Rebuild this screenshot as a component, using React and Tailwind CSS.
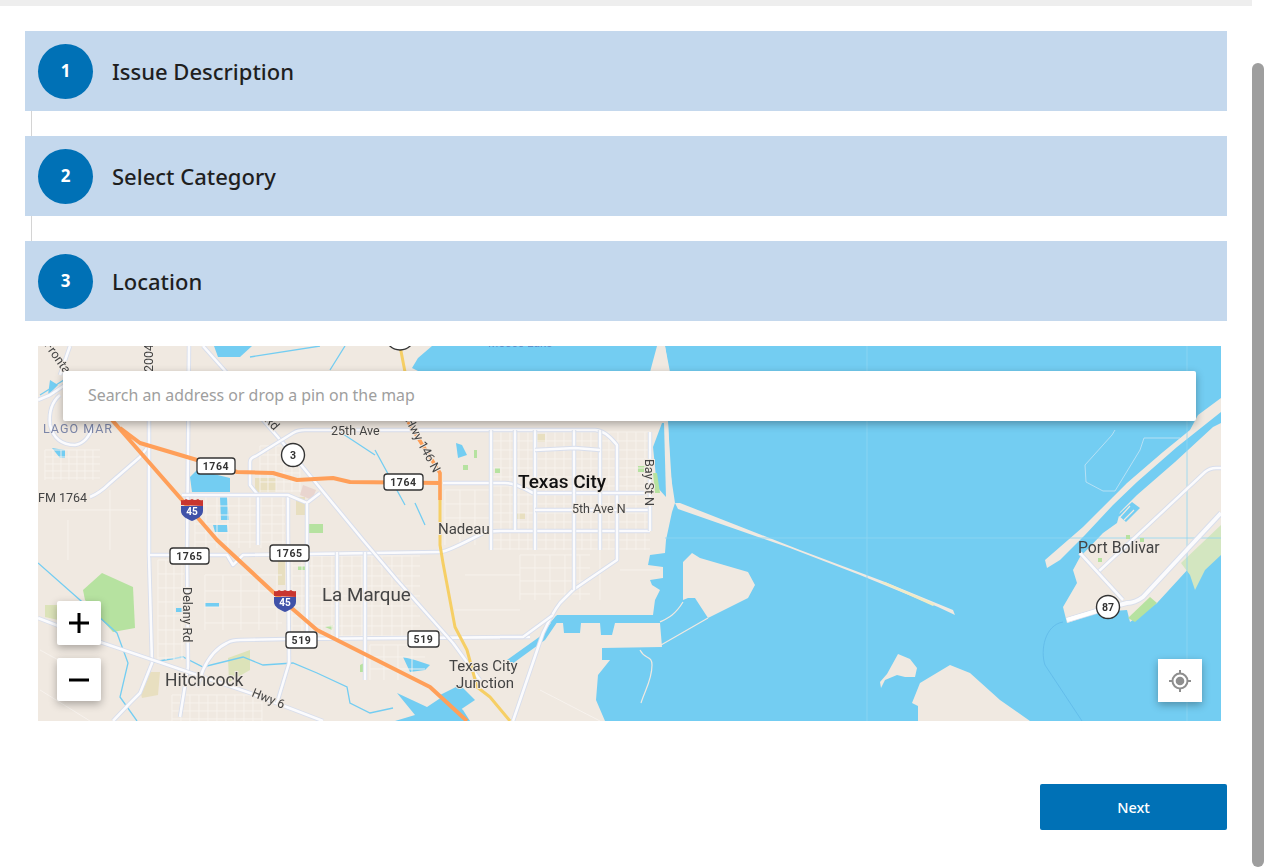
import React from "react";

const WATER = "#73CDF2";
const LAND = "#F0E9E1";
const PARK = "#B6E2A0";
const TAN = "#E8DFC0";

const majorRoads = [
  "M90 497 Q100 493 110 483 L140 457 L147 448",
  "M149 346 L149 555 L152 663 L140 693 L130 703 L113 721",
  "M189 346 L187 555 L188 667 L180 717",
  "M38 618 L103 643 L250 693 L323 721",
  "M150 555 L227 555 L233 565 L243 555 L440 552 Q447 552 483 533 Q487 531 500 531 L650 531",
  "M197 687 L203 670 Q212 650 227 643 Q232 640 240 640 L287 639 L530 637",
  "M288 495 L288 530 L289 663 L277 703",
  "M203 346 L227 373 L263 420 L283 443 L363 540 L397 580 L453 643 L480 680",
  "M258 545 L258 495 L250 485 L250 462 Q250 458 256 456 L293 433 Q298 430 305 430 L595 430 Q605 430 617 445 L617 560 L573 590 L560 603 Q553 612 543 633 L513 721",
  "M443 483 L505 483 Q515 483 533 493 L650 493",
  "M491 430 L491 550", "M515 430 L515 530", "M535 430 L535 550", "M574 430 L574 590", "M600 430 L600 550",
  "M535 450 L575 448 L600 450", "M535 510 L650 510", "M182 495 L288 495 L307 503 L320 493",
  "M650 432 L650 531", "M500 637 L523 637 L553 615", "M337 552 L337 640", "M307 503 L307 640", "M365 552 L365 680",
  "M1221 468 L1216 468 Q1210 468 1205 472 L1098 572", "M1080 553 L1123 600",
  "M60 395 Q48 405 50 425 Q55 445 75 445 Q88 443 93 425",
  "M38 400 L50 395 L80 375 M60 375 L70 346",
];

const grid = (x0, y0, x1, y1, dx, dy) => {
  let d = "";
  for (let x = x0; x <= x1; x += dx) d += `M${x} ${y0} L${x} ${y1} `;
  for (let y = y0; y <= y1; y += dy) d += `M${x0} ${y} L${x1} ${y} `;
  return d;
};

const minorRoads = [
  grid(445, 490, 490, 545, 15, 14),
  grid(492, 432, 650, 550, 9, 9),
  grid(292, 556, 420, 636, 10, 10),
  grid(195, 497, 285, 548, 11, 9),
  grid(260, 446, 300, 492, 8, 9),
  grid(45, 450, 100, 480, 8, 7),
  grid(158, 560, 184, 660, 8, 14),
  grid(172, 695, 262, 721, 9, 8),
  grid(205, 575, 282, 630, 18, 16),
  grid(520, 555, 590, 600, 15, 13),
  grid(370, 645, 425, 680, 14, 12),
  "M60 510 L140 510 M110 490 L110 550 M68 520 L68 560 M600 545 L600 600 M620 570 L660 570 M465 575 L520 575 M455 610 L520 610 M40 650 L95 680 M40 690 L90 721 M540 690 L600 721",
];

const Road = ({ d, w = 3.2 }) => (
  <>
    <path d={d} fill="none" stroke="#D8DEEC" strokeWidth={w + 1.2} strokeLinejoin="round" />
    <path d={d} fill="none" stroke="#FBFBFD" strokeWidth={w - 0.6} strokeLinejoin="round" />
  </>
);

const Shield = ({ x, y, w, label }) => (
  <g>
    <rect x={x} y={y} width={w} height={16} rx={3} fill="#fff" stroke="#333" strokeWidth={1.3} />
    <text x={x + w / 2} y={y + 12} textAnchor="middle" fontSize="10.5" fontWeight="700" letterSpacing=".6" fill="#333">{label}</text>
  </g>
);

const Circle = ({ x, y, label }) => (
  <g>
    <circle cx={x} cy={y} r={11.5} fill="#fff" stroke="#333" strokeWidth={1.4} />
    <text x={x} y={y + 4} textAnchor="middle" fontSize="10.5" fontWeight="700" fill="#333">{label}</text>
  </g>
);

const Interstate = ({ x, y }) => (
  <g transform={`translate(${x} ${y})`}>
    <path d="M-11 -5 C-11 -8 -11 -9 -11 -10 Q-8 -9 -6 -11 Q-3 -9 0 -11 Q3 -9 6 -11 Q8 -9 11 -10 L11 -4 Z" fill="#C8352F" />
    <path d="M-11 -4 L11 -4 L11 1 C11 6 5 9 0 11 C-5 9 -11 6 -11 1 Z" fill="#3F51A8" />
    <text x="0" y="5" textAnchor="middle" fontSize="10" fontWeight="700" fill="#fff">45</text>
  </g>
);

const Label = ({ x, y, size = 13, children, rotate, fill = "#444", anchor = "start", weight = 400, stroke = true }) => (
  <text
    x={x}
    y={y}
    fontSize={size}
    fontWeight={weight}
    fill={fill}
    textAnchor={anchor}
    stroke={stroke ? LAND : "none"}
    strokeWidth={stroke ? 2 : 0}
    paintOrder="stroke"
    transform={rotate ? `rotate(${rotate} ${x} ${y})` : undefined}
  >
    {children}
  </text>
);

function MapArt() {
  return (
    <svg viewBox="38 346 1183 375" className="block h-full w-full blur-[0.35px]" style={{ fontFamily: "Roboto, sans-serif" }}>
      <rect x="38" y="346" width="1183" height="375" fill={LAND} />

      {/* bay */}
      <path
        fill={WATER}
        d="M432 346 L425 352 L418 358 L412 368 L420 372 L520 372 L650 372 L657 346 L665 346 L670 372 L668 421 L670 470 L675 503 L672 512 L666 540 L665 553 L650 555 L648 565 L663 567 L663 578 L650 580 L652 585 L660 590 L655 600 L653 615 L557 615 L550 623 L563 623 L564 633 L580 633 L581 623 L600 623 L601 635 L612 635 L615 623 L660 623 L662 647 L602 648 L602 660 L610 660 L598 675 L596 700 L605 721 L1221 721 L1221 346 Z"
      />
      <path d="M507 660 L542 635 L556 616 L560 618 L545 640 L512 664 Z" fill={WATER} />

      {/* land in the bay */}
      <path fill={LAND} d="M658 346 L665 346 L669 372 L668 423 L673 503 L666 503 L662 423 L660 372 Z" />
      <path fill={WATER} d="M662 423 L664 423 L666 497 L657 487 L653 447 Z" />
      <path fill={LAND} d="M675 503 L680 503 L800 550 L885 582 L953 610 L955 615 L938 607 L860 575 L790 548 L678 509 Z" />
      <path fill="#EFEBC6" d="M885 582 L935 604 L933 606 L880 582 Z" />
      <path fill={LAND} d="M683 562 L692 553 L700 558 L748 572 L755 585 L748 598 L708 618 L695 598 L688 598 L683 600 Z" />
      <path fill="none" stroke={LAND} strokeWidth="1.2" d="M683 602 C675 615 668 618 660 622 M708 618 L661 645" />
      <path fill="none" stroke={LAND} strokeWidth="1.2" d="M640 650 C645 660 652 655 652 665 C652 680 645 690 641 703" />
      <path fill={LAND} d="M898 654 L910 659 L917 668 L915 677 L905 677 L897 675 L885 680 L881 688 L880 682 L887 674 Z" />
      <path fill={LAND} d="M912 703 L918 706 L918 721 L1030 721 L1000 700 L970 673 L950 665 L930 677 L920 683 Z" />

      {/* Bolivar peninsula */}
      <path
        fill={LAND}
        d="M1221 423 L1213 427 L1175 462 L1137 495 L1120 512 L1117 523 L1103 533 L1080 557 L1073 570 L1077 583 L1063 607 L1067 623 L1100 612 L1127 610 L1130 622 L1157 603 L1190 567 L1221 547 Z"
      />
      <path
        fill={LAND}
        d="M1221 398 L1198 415 L1190 430 L1163 452 L1127 483 L1113 497 L1083 527 L1045 560 L1047 568 L1060 560 L1085 535 L1113 505 L1137 482 L1177 447 L1221 412 Z"
      />
      <path fill="#D3E6C0" d="M1181 563 L1221 525 L1221 555 L1205 570 L1195 590 L1190 575 Z" />
      <path fill={PARK} d="M1128 618 L1150 597 L1157 603 L1135 622 Z" />
      <path fill="none" stroke="#C7E4F5" strokeWidth=".8" d="M1112 435 L1085 465 L1086 482 L1103 491 L1115 491 L1140 450 L1144 438 L1180 438 M1112 435 L1115 430" />
      <path fill="none" stroke="#5FB9E8" strokeWidth=".8" d="M1063 622 C1045 625 1040 650 1045 665 L1082 721" />
      <path fill="none" stroke="#8FD6F3" strokeWidth=".8" d="M867 346 L867 721 M665 538 L1221 538 M1187 346 L1187 721" />
      <path fill={WATER} d="M1118 515 L1132 502 L1140 508 L1126 522 Z" />
      <path fill="none" stroke={LAND} strokeWidth="1.2" d="M1120 517 L1130 506 M1124 520 L1134 510" />

      {/* land features */}
      <path fill={PARK} d="M83 590 L102 573 L133 587 L135 628 L113 632 L102 620 L85 600 Z" />
      <path fill="#DCE3B9" d="M45 605 L58 605 L58 620 L45 617 Z" />
      <path fill={TAN} d="M140 690 L147 672 L160 672 L158 695 L142 698 Z" />
      <path fill={TAN} d="M278 545 L285 545 L285 585 L278 585 Z" />
      <path fill={TAN} d="M255 478 L276 478 L276 492 L255 492 Z" />
      <path fill={TAN} d="M296 497 L305 497 L305 515 L296 515 Z" />
      <path fill={TAN} d="M536 434 L545 434 L545 442 L536 442 Z" />
      <path fill={TAN} d="M517 513 L525 513 L525 519 L517 519 Z" />
      <path fill="#DCE3B9" d="M228 658 L250 650 L250 670 L229 682 Z" />
      <path fill="#E9D5CF" d="M303 485 L316 490 L312 500 L300 495 Z" />
      <path fill={PARK} d="M309 524 L323 524 L323 533 L309 533 Z" />
      <path fill={PARK} d="M638 466 L650 466 L650 472 L638 472 Z" />
      <path fill={PARK} d="M474 450 L477 450 L477 458 L474 458 Z" />
      <path fill={PARK} d="M463 465 L468 465 L468 470 L463 470 Z" />
      <path fill={PARK} d="M653 473 L657 473 L660 493 L655 493 Z" />
      <path fill={PARK} d="M298 566 L305 566 L305 570 L298 570 Z" />
      <path fill={PARK} d="M325 627 L333 625 L332 630 Z" />
      <path fill={PARK} d="M360 665 L366 662 L366 672 L360 672 Z" />
      <path fill={PARK} d="M495 468 L500 468 L500 473 L495 473 Z" />
      <path fill={PARK} d="M1098 558 L1102 558 L1102 562 L1098 562 Z M1126 535 L1130 535 L1130 539 L1126 539 Z M1140 538 L1144 538 L1144 542 L1140 542 Z" />

      {/* inland water */}
      <path fill={WATER} d="M190 477 L197 470 L230 478 L230 492 L192 492 Z" />
      <path fill={WATER} d="M220 497 L227 497 L229 520 L221 520 Z" />
      <path fill={WATER} d="M213 525 L227 525 L228 532 L215 532 Z" />
      <path fill={WATER} d="M214 346 L252 346 L240 357 L218 357 Z" />
      <path fill={WATER} d="M205 603 L219 603 L219 607 L205 607 Z M176 612 L188 612 L188 608 L176 608 Z" />
      <path fill={WATER} d="M456 443 L462 445 L467 455 L458 458 Z" />
      <path fill={WATER} d="M403 657 L415 660 L430 665 L425 670 L410 672 Z" />
      <path fill={WATER} d="M397 693 L427 707 L445 695 L463 710 L470 721 L395 721 L415 715 Z" />
      <path fill={WATER} d="M440 695 L460 685 L475 700 L460 710 Z" />
      <path fill={WATER} d="M50 380 L58 385 L48 395 Z M52 448 L65 450 L65 458 L60 458 Z" />
      <path
        fill="none"
        stroke={WATER}
        strokeWidth="1.3"
        d="M38 563 L80 600 L117 633 L128 663 L120 697 L137 721 M153 662 L183 657 L203 667 L243 657 L263 665 L293 663 L317 673 L347 687 L350 703 L370 713 L393 708 M250 357 L320 346 M330 370 L345 346 M375 450 L405 505 M40 395 L75 373 M337 430 L375 455 M415 503 L425 525"
      />

      {minorRoads.map((d, i) => (
        <path key={i} d={d} fill="none" stroke="#F7F3EE" strokeWidth=".9" />
      ))}
      {majorRoads.map((d, i) => (
        <Road key={i} d={d} />
      ))}
      <Road w={4.5} d="M1067 620 L1100 610 L1127 603 Q1135 603 1143 597 L1221 513" />
      <path d="M1067 620 L1100 610" fill="none" stroke="#fff" strokeWidth="4" />

      {/* highways */}
      <path d="M400 346 L405 372 L407 420 L440 473 L440 545 L443 563 L455 627 L467 650 L477 687 L490 697 L510 721" fill="none" stroke="#F6CF65" strokeWidth="3" strokeLinejoin="round" />
      <path d="M407 420 L440 473 L440 500" fill="none" stroke="#FF9F59" strokeWidth="3.5" strokeLinejoin="round" />
      <path
        d="M112 420 L182 500 L198 518 L217 540 L273 592 L317 630 L430 687 L467 721 M120 428 L140 443 L197 460 L237 472 L273 473 L297 480 L333 478 L350 482 L440 483"
        fill="none"
        stroke="#FF9F59"
        strokeWidth="4"
        strokeLinejoin="round"
      />

      {/* labels */}
      <Label x={43} y={433} fill="#7C86A8" size={12.5} stroke={false}>
        <tspan letterSpacing="1">LAGO MAR</tspan>
      </Label>
      <Label x={38} y={502} size={12.5}>FM 1764</Label>
      <Label x={331} y={435} size={12.5}>25th Ave</Label>
      <Label x={405} y={420} size={12.5} rotate={62}>Hwy 146 N</Label>
      <Label x={44} y={345} size={12.5} rotate={55}>Frontage</Label>
      <Label x={153} y={372} size={12.5} rotate={-90}>2004</Label>
      <Label x={264} y={420} size={12.5} rotate={48}>Rd</Label>
      <Label x={518} y={488} size={19} fill="#111" weight={500}>Texas City</Label>
      <Label x={572} y={513} size={12.5}>5th Ave N</Label>
      <Label x={645} y={459} size={12.5} rotate={90}>Bay St N</Label>
      <Label x={438} y={534} size={15}>Nadeau</Label>
      <Label x={322} y={601} size={18.8}>La Marque</Label>
      <Label x={165} y={686} size={17.5}>Hitchcock</Label>
      <Label x={251} y={696} size={12.5} rotate={22}>Hwy 6</Label>
      <Label x={183} y={587} size={12.5} rotate={90}>Delany Rd</Label>
      <Label x={449} y={671} size={15}>Texas City</Label>
      <Label x={456} y={688} size={15}>Junction</Label>
      <Label x={1078} y={553} size={15.8} stroke={false}>Port Bolivar</Label>
      <Label x={488} y={347} size={12} fill="#5C8FCB" stroke={false}>Moses Lake</Label>

      <Shield x={197} y={458} w={38} label="1764" />
      <Shield x={384} y={474} w={39} label="1764" />
      <Shield x={170} y={548} w={39} label="1765" />
      <Shield x={270} y={545} w={39} label="1765" />
      <Shield x={286} y={632} w={31} label="519" />
      <Shield x={408} y={631} w={31} label="519" />
      <Circle x={293} y={455} label="3" />
      <Circle x={1108} y={607} label="87" />
      <circle cx={400} cy={335} r={15} fill="#fff" stroke="#333" strokeWidth="1.4" />
      <Interstate x={192} y={510} />
      <Interstate x={285} y={601} />
    </svg>
  );
}

const Step = ({ n, title }) => (
  <div className="flex h-20 items-center bg-[#C4D8ED] pl-[13px]">
    <div className="flex h-[55px] w-[55px] items-center justify-center rounded-full bg-[#0071B6] text-[17px] font-bold text-white">
      {n}
    </div>
    <div className="ml-[19px] text-[22px] font-medium text-[#1f1f1f]">{title}</div>
  </div>
);

const Connector = () => <div className="ml-[6px] h-[25px] w-px bg-[#D4D4D4]" />;

const MapBtn = ({ children, className = "" }) => (
  <div className={`absolute flex items-center justify-center rounded-[2px] bg-white shadow-[0_3px_8px_rgba(0,0,0,0.3)] ${className}`}>
    {children}
  </div>
);

export default function App() {
  return (
    <div className="flex h-[867px] w-[1264px] overflow-hidden bg-white" style={{ fontFamily: '"Noto Sans", sans-serif' }}>
      <main className="w-[1252px]">
        <div className="h-[6px] bg-[#EEEEEE]" />
        <div className="px-[25px] pt-[25px]">
          <Step n="1" title="Issue Description" />
          <Connector />
          <Step n="2" title="Select Category" />
          <Connector />
          <Step n="3" title="Location" />
          <div className="relative ml-[13px] mt-[25px] h-[375px] w-[1183px] overflow-hidden">
            <MapArt />
            <div className="absolute left-[25px] top-[25px] flex h-[50px] w-[1133px] items-center rounded-[2px] bg-white pl-[25px] text-[15.9px] text-[#9E9E9E] shadow-[0_3px_8px_rgba(0,0,0,0.3)]">
              Search an address or drop a pin on the map
            </div>
            <MapBtn className="left-[19px] top-[255px] h-[44px] w-[44px]">
              <svg width="22" height="22" viewBox="0 0 22 22"><path d="M11 1v20M1 11h20" stroke="#000" strokeWidth="3" /></svg>
            </MapBtn>
            <MapBtn className="left-[19px] top-[312px] h-[43px] w-[44px]">
              <svg width="22" height="22" viewBox="0 0 22 22"><path d="M1 11h20" stroke="#000" strokeWidth="3" /></svg>
            </MapBtn>
            <MapBtn className="left-[1120px] top-[313px] h-[43px] w-[44px] rounded-none">
              <svg width="24" height="24" viewBox="0 0 24 24" fill="none" stroke="#8E8E8E">
                <circle cx="12" cy="12" r="7.5" strokeWidth="2" />
                <circle cx="12" cy="12" r="4.3" fill="#8E8E8E" stroke="none" />
                <path d="M12 1v3.5M12 19.5V23M1 12h3.5M19.5 12H23" strokeWidth="2" />
              </svg>
            </MapBtn>
          </div>
          <div className="mt-[63px] flex justify-end">
            <button className="h-[46px] w-[187px] rounded-[2px] bg-[#0071B6] pt-px text-[14.5px] font-medium text-white">Next</button>
          </div>
        </div>
      </main>
      <aside className="w-[12px] pt-[63px]">
        <div className="h-[804px] w-[12px] rounded-[6px] bg-[#9E9E9E]" />
      </aside>
    </div>
  );
}
